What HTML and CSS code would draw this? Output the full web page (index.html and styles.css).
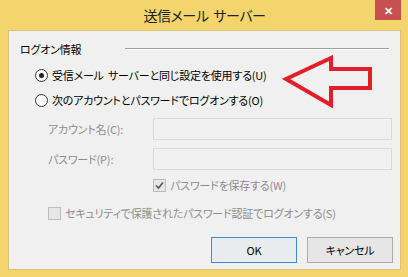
FILE: index.html
```html
<!DOCTYPE html>
<html lang="ja">
<head>
    <meta charset="UTF-8">
    <title>送信メール サーバー</title>
    <link rel="stylesheet" href="styles.css">
</head>
<body>
    <div class="window">
        <div class="titlebar">
            <div class="title">送信メール サーバー</div>
            <div class="close">&#x2715;</div>
        </div>
        <div class="client">
            <div class="group-head">
                <span class="group-label">ログオン情報</span>
                <span class="group-line"></span>
            </div>
            <div class="option radio-row">
                <span class="radio checked"></span>
                <span>受信メール サーバーと同じ設定を使用する(U)</span>
            </div>
            <div class="option radio-row second">
                <span class="radio"></span>
                <span>次のアカウントとパスワードでログオンする(O)</span>
            </div>
            <div class="field">
                <span class="field-label">アカウント名(C):</span>
                <span class="textbox"></span>
            </div>
            <div class="field">
                <span class="field-label">パスワード(P):</span>
                <span class="textbox"></span>
            </div>
            <div class="option save-row disabled">
                <span class="check checked">
                    <svg width="9" height="9" viewBox="0 0 9 9"><path d="M1 4.5 L3.5 7 L8 1.5" fill="none" stroke="#555" stroke-width="1.6"/></svg>
                </span>
                <span>パスワードを保存する(W)</span>
            </div>
            <div class="option spa-row disabled">
                <span class="check"></span>
                <span>セキュリティで保護されたパスワード認証でログオンする(S)</span>
            </div>
            <div class="buttons">
                <button class="btn default">OK</button>
                <button class="btn">キャンセル</button>
            </div>
            <svg class="arrow" width="94" height="56" viewBox="0 0 94 56">
                <polygon points="4,24 49,3 49,14 88,14 88,33 49,33 49,50" fill="none" stroke="#E31E28" stroke-width="4" stroke-linejoin="miter"/>
            </svg>
        </div>
    </div>
</body>
</html>
```

FILE: styles.css
```css
body {
    margin: 0;
    font-family: "Noto Sans CJK JP", "Noto Sans", sans-serif;
    font-size: 11px;
    letter-spacing: -0.2px;
    font-feature-settings: "palt";
    color: #000;
}
.window {
    width: 408px;
    height: 277px;
    box-sizing: border-box;
    background-color: #F4D46C;
    padding: 0 7px 7px 8px;
    display: flex;
    flex-direction: column;
}
.titlebar {
    height: 30px;
    display: grid;
    grid-template-columns: 26px 1fr 26px;
}
.title {
    grid-column: 2;
    text-align: center;
    font-size: 14px;
    letter-spacing: -0.4px;
    line-height: 30px;
    color: #222;
    word-spacing: 2px;
}
.close {
    grid-column: 3;
    height: 20px;
    background-color: #C75050;
    color: #fff;
    font-size: 11px;
    font-weight: bold;
    text-align: center;
    line-height: 20px;
}
.client {
    flex: 1;
    position: relative;
    background-color: #F0F0F0;
    border: 1px solid #D8C27E;
    padding: 8px 7px 0 11px;
    display: flex;
    flex-direction: column;
}
.group-head {
    height: 20px;
    display: flex;
    align-items: center;
}
.group-label {
    width: 105px;
}
.group-line {
    width: 264px;
    border-top: 1px solid #A0A0A0;
    border-bottom: 1px solid #fff;
}
.option {
    display: flex;
    align-items: center;
    gap: 4px;
    word-spacing: 2px;
}
.radio-row {
    height: 20px;
    margin-top: 6px;
    padding-left: 15px;
}
.radio-row.second {
    margin-top: 5px;
}
.radio {
    width: 11px;
    height: 11px;
    border: 1px solid #333;
    border-radius: 50%;
    background-color: #fff;
    display: flex;
    align-items: center;
    justify-content: center;
}
.radio.checked::after {
    content: "";
    width: 5px;
    height: 5px;
    border-radius: 50%;
    background-color: #222;
}
.field {
    height: 22px;
    margin-top: 8px;
    padding-left: 28px;
    display: flex;
    align-items: center;
}
.field-label {
    width: 105px;
    color: #8D8D8D;
}
.textbox {
    width: 237px;
    height: 20px;
    border: 1px solid #D9D9D9;
    background-color: #F0F0F0;
}
.disabled {
    color: #8D8D8D;
}
.save-row {
    height: 14px;
    margin-top: 8px;
    padding-left: 133px;
}
.spa-row {
    height: 14px;
    margin-top: 14px;
    padding-left: 28px;
}
.check {
    width: 11px;
    height: 11px;
    border: 1px solid #BCBCBC;
    background-color: #E6E6E6;
    display: flex;
    align-items: center;
    justify-content: center;
}
.buttons {
    margin-top: 17px;
    display: flex;
    justify-content: flex-end;
    gap: 10px;
}
.btn {
    width: 86px;
    height: 26px;
    font-family: inherit;
    font-size: 11px;
    letter-spacing: -0.2px;
    font-feature-settings: "palt";
    color: #000;
    background-color: #E6E6E6;
    border: 1px solid #ACACAC;
    padding: 0;
}
.btn.default {
    border-color: #3C8CD0;
    background-color: #E9ECEF;
}
.arrow {
    position: absolute;
    left: 273px;
    top: 24px;
}
```
